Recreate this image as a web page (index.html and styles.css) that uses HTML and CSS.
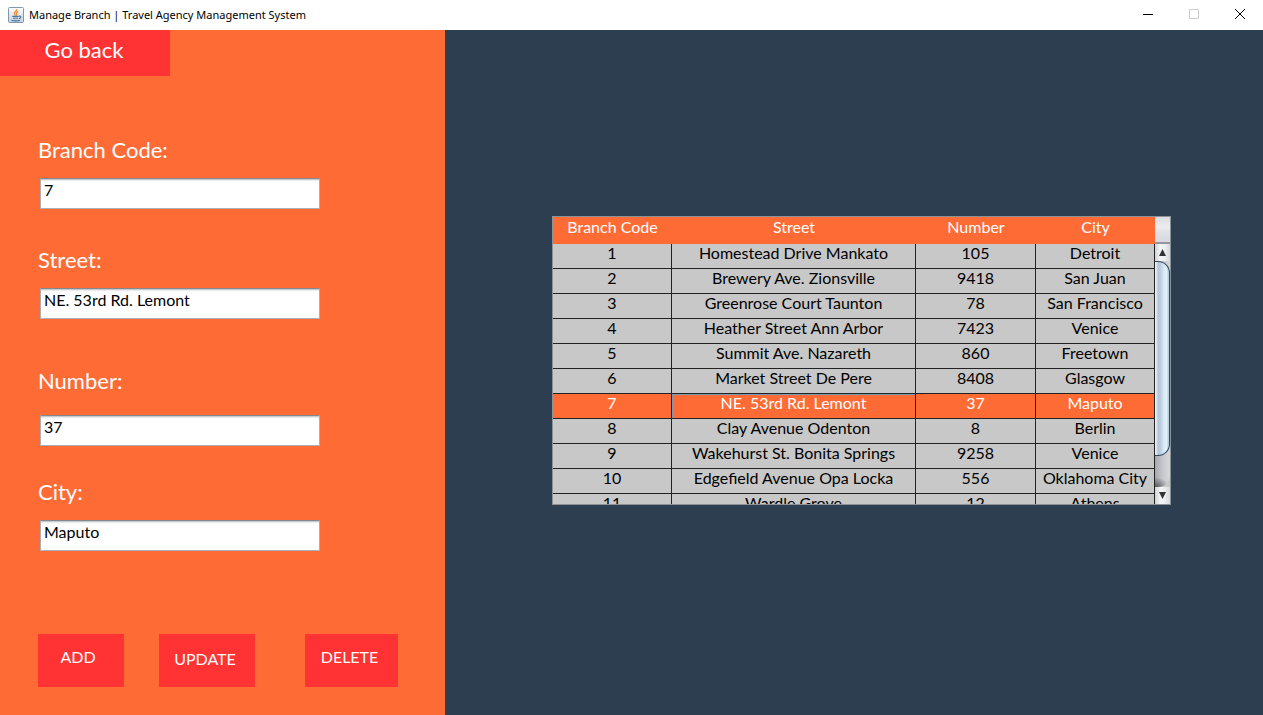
FILE: index.html
```html
<!DOCTYPE html>
<html lang="en">
<head>
<meta charset="utf-8">
<title>Manage Branch | Travel Agency Management System</title>
<link rel="stylesheet" href="styles.css">
</head>
<body>
<header class="titlebar">
  <svg class="app-icon" viewBox="0 0 16 16" aria-hidden="true">
    <defs><linearGradient id="tile" x1="0" y1="0" x2="0" y2="1"><stop offset="0" stop-color="#ffffff"/><stop offset="1" stop-color="#c3d0de"/></linearGradient></defs>
    <rect x=".5" y=".5" width="15" height="15" rx="1" fill="url(#tile)" stroke="#8296ab"/>
    <path d="M8.8 2.2C9.4 4.2 5.8 4.8 6.3 6.6c.2.8 1 1.2 1.2 2M10.2 4.6C7.8 5.6 8 6.6 8.7 7.3c.4.5.2 1-.2 1.4" fill="none" stroke="#ee8822" stroke-width="1.2"/>
    <path d="M4.3 9.4h6.4M5 11.2h5.2M3.4 13.2c2.6.8 6 .8 8.6 0M11 9.2c2.6-.5 2.4 1.8.1 2.4" fill="none" stroke="#47719b" stroke-width="1.1"/>
  </svg>
  <h1 class="title">Manage Branch | Travel Agency Management System</h1>
  <div class="window-controls">
    <button class="window-button" aria-label="Minimize"><svg viewBox="0 0 12 12"><path d="M1 5.5h10" stroke="#000"/></svg></button>
    <button class="window-button" aria-label="Maximize" disabled><svg viewBox="0 0 12 12"><path d="M1.5 .5h9v9h-9z" fill="none" stroke="#ccc"/></svg></button>
    <button class="window-button" aria-label="Close"><svg viewBox="0 0 12 12"><path d="M1 0l10 10M11 0L1 10" stroke="#000"/></svg></button>
  </div>
</header>
<main class="content">
  <section class="sidebar">
    <button class="button back">Go back</button>
    <form class="form">
      <div class="field"><label for="code">Branch Code:</label><input id="code" type="text" value="7"></div>
      <div class="field street"><label for="street">Street:</label><input id="street" type="text" value="NE. 53rd Rd. Lemont"></div>
      <div class="field number"><label for="number">Number:</label><input id="number" type="text" value="37"></div>
      <div class="field city"><label for="city">City:</label><input id="city" type="text" value="Maputo"></div>
      <div class="actions">
        <button type="button" class="button add">ADD</button>
        <button type="button" class="button update">UPDATE</button>
        <button type="button" class="button delete">DELETE</button>
      </div>
    </form>
  </section>
  <section class="workspace">
    <div class="scroll-pane">
      <div class="viewport">
        <table class="branches">
          <colgroup><col class="col-code"><col class="col-street"><col class="col-number"><col class="col-city"></colgroup>
          <thead><tr><th>Branch Code</th><th>Street</th><th>Number</th><th>City</th></tr></thead>
          <tbody>
            <tr><td>1</td><td>Homestead Drive Mankato</td><td>105</td><td>Detroit</td></tr>
            <tr><td>2</td><td>Brewery Ave. Zionsville</td><td>9418</td><td>San Juan</td></tr>
            <tr><td>3</td><td>Greenrose Court Taunton</td><td>78</td><td>San Francisco</td></tr>
            <tr><td>4</td><td>Heather Street Ann Arbor</td><td>7423</td><td>Venice</td></tr>
            <tr><td>5</td><td>Summit Ave. Nazareth</td><td>860</td><td>Freetown</td></tr>
            <tr><td>6</td><td>Market Street De Pere</td><td>8408</td><td>Glasgow</td></tr>
            <tr class="selected"><td>7</td><td class="focused">NE. 53rd Rd. Lemont</td><td>37</td><td>Maputo</td></tr>
            <tr><td>8</td><td>Clay Avenue Odenton</td><td>8</td><td>Berlin</td></tr>
            <tr><td>9</td><td>Wakehurst St. Bonita Springs</td><td>9258</td><td>Venice</td></tr>
            <tr><td>10</td><td>Edgefield Avenue Opa Locka</td><td>556</td><td>Oklahoma City</td></tr>
            <tr><td>11</td><td>Wardle Grove</td><td>12</td><td>Athens</td></tr>
          </tbody>
        </table>
      </div>
      <div class="scroll-side">
        <div class="corner"></div>
        <button class="arrow" aria-label="Scroll up"><svg viewBox="0 0 15 17"><path d="M7.5 5L11 12H4z" fill="#333"/></svg></button>
        <div class="track"><div class="thumb"></div></div>
        <button class="arrow" aria-label="Scroll down"><svg viewBox="0 0 15 17"><path d="M7.5 12L11 5H4z" fill="#333"/></svg></button>
      </div>
    </div>
  </section>
</main>
</body>
</html>
```
FILE: styles.css
```css
* { box-sizing: border-box; }

body {
  margin: 0;
  min-height: 100vh;
  display: flex;
  flex-direction: column;
  font-family: Lato, "Liberation Sans", sans-serif;
  font-size: 16px;
}

button, input { font: inherit; }
button { border: 0; padding: 0; }

.titlebar {
  display: flex;
  align-items: center;
  height: 30px;
  padding-left: 8px;
  background: #fff;
}
.app-icon { width: 16px; height: 16px; margin-right: 5px; }
.title {
  margin: 0;
  font: 400 11px/16px "Noto Sans", sans-serif;
  color: #000;
}
.window-controls { display: flex; margin-left: auto; }
.window-button {
  display: grid;
  place-items: center;
  width: 46px;
  height: 30px;
  background: none;
}
.window-button svg { width: 12px; height: 12px; }

.content {
  flex: 1;
  display: grid;
  grid-template-columns: 445px 1fr;
}

.sidebar { background: #ff6b35; color: #fff; }
.button { background: #ff3333; color: #fff; }
.back {
  display: block;
  width: 170px;
  height: 46px;
  padding: 0 2px 7px 0;
  font-size: 22px;
}
.form { padding: 60px 38px 28px; }
.field { display: flex; flex-direction: column; }
.field label {
  font-size: 22px;
  line-height: 28px;
  margin-bottom: 14px;
}
.field input {
  width: 280px;
  height: 31px;
  margin-left: 2px;
  padding: 0 3px 8px;
  border: 1px solid #a9b1b7;
  border-top-color: #82898f;
  background: #fff;
  box-shadow: inset 0 2px 2px -1px #b5b8ba;
  color: #000;
}
.street { margin-top: 37px; }
.number { margin-top: 48px; }
.number label { margin-bottom: 20px; }
.city { margin-top: 32px; }
.actions { display: flex; margin-top: 83px; }
.actions .button { height: 53px; }
.actions .add { width: 86px; padding: 0 6px 8px 0; }
.actions .update { width: 96px; margin-left: 35px; padding: 0 4px 4px 0; }
.actions .delete { width: 93px; margin-left: 50px; padding: 0 4px 8px 0; }

.workspace {
  display: grid;
  place-items: center;
  padding: 0 0 24px 15px;
  background: #2d3e50;
}
.scroll-pane {
  display: flex;
  width: 619px;
  height: 289px;
  border: 1px solid #8d9299;
  background: #c8c8c8;
}
.viewport { flex: 1; overflow: hidden; }
.branches {
  width: 100%;
  table-layout: fixed;
  border-collapse: separate;
  border-spacing: 0;
  text-align: center;
  line-height: 18px;
}
.col-code { width: 119px; }
.col-street { width: 244px; }
.col-number { width: 120px; }
.col-city { width: 119px; }
.branches th {
  height: 27px;
  padding: 0 0 7px;
  background: #ff6b35;
  color: #fff;
  font-weight: 400;
}
.branches td {
  height: 25px;
  padding: 0 0 6px;
  border-right: 1px solid #222;
  border-bottom: 1px solid #222;
  color: #000;
  white-space: nowrap;
}
.branches .selected td { background: #ff6b35; color: #fff; }
.branches .focused { box-shadow: inset 1px 1px #739cba; }

.scroll-side { display: flex; flex-direction: column; width: 15px; }
.corner {
  height: 27px;
  border-bottom: 2px solid #92979f;
  background: linear-gradient(#d9dbe0, #ededf1 40%, #dfe1e6 60%, #d7d9df);
}
.arrow {
  display: block;
  height: 17px;
  background: linear-gradient(90deg, #cfd2d7, #f4f5f6 35%, #eeeff1 65%, #d5d7dc);
}
.arrow svg { display: block; width: 15px; height: 17px; }
.track {
  flex: 1;
  overflow: hidden;
  background:
    radial-gradient(ellipse 14px 10px at 0 100%, #55575b, transparent),
    linear-gradient(90deg, #a6a8ad, #c6c7cb 50%, #d6d7db);
  border-radius: 0 0 12px 0;
}
.thumb {
  height: 195px;
  border: 1px solid #34495e;
  border-left: 0;
  border-radius: 0 12px 12px 0;
  background: linear-gradient(90deg, #f4f6f8, #b3c5d8 25%, #bdd0e1 40%, #d9eaf6 65%, #e4f4fc 80%, #a9c1d6);
}
```
